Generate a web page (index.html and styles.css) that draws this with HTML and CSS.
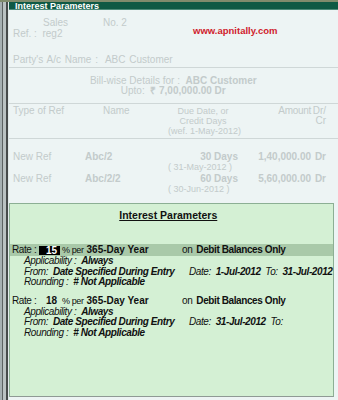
FILE: index.html
```html
<!DOCTYPE html>
<html lang="en">
<head>
  <meta charset="UTF-8" />
  <title>Interest Parameters</title>
  <link rel="stylesheet" href="styles.css">
</head>
<body>

  <div class="topline"></div>

  <div class="screen">
    <div class="edge"></div>

    <div class="main">
      <div class="titlebar">Interest Parameters</div>

      <div class="voucher-head">
        <div class="vh-row first">
          <span class="vtype">Sales</span>
          <span>No. 2</span>
        </div>
        <div class="vh-row ref">
          <span>Ref. :&nbsp; reg2</span>
          <span class="site">www.apnitally.com</span>
        </div>
        <div class="vh-row party">Party's A/c Name :&nbsp; ABC Customer</div>
      </div>

      <div class="bills">
        <div class="bills-title">
          <div>Bill-wise Details for :&nbsp; <b>ABC Customer</b></div>
          <div>Upto:&nbsp; <b>₹ 7,00,000.00 Dr</b></div>
        </div>

        <div class="bills-head cols">
          <span>Type of Ref</span>
          <span class="name-h">Name</span>
          <span class="due-h">Due Date, or<br>Credit Days<br>(wef. 1-May-2012)</span>
          <span class="amt">Amount</span>
          <span class="drcr">Dr/<br>Cr</span>
        </div>

        <div class="bill-list">
          <div class="bill cols">
            <span>New Ref</span>
            <b>Abc/2</b>
            <b class="days">30 Days</b>
            <b class="amt">1,40,000.00</b>
            <b class="drcr">Dr</b>
            <span class="due-date">( 31-May-2012 )</span>
          </div>
          <div class="bill cols">
            <span>New Ref</span>
            <b>Abc/2/2</b>
            <b class="days">60 Days</b>
            <b class="amt">5,60,000.00</b>
            <b class="drcr">Dr</b>
            <span class="due-date">( 30-Jun-2012 )</span>
          </div>
        </div>

        <div class="panel">
          <div class="panel-title">Interest Parameters</div>

          <div class="rate-block">
            <div class="rate-row active">
              <div class="rate-left">
                <span class="lbl">Rate :</span>
                <span class="pct current">15</span>
                <span class="per">% per</span>
                <b>365-Day Year</b>
              </div>
              <span class="on">on</span>
              <b>Debit Balances Only</b>
            </div>
            <div class="detail">Applicability :&nbsp; <b>Always</b></div>
            <div class="detail from">
              <div class="from-left">From:&nbsp; <b>Date Specified During Entry</b></div>
              <div>Date:&nbsp; <b>1-Jul-2012</b>&nbsp; To:&nbsp; <b>31-Jul-2012</b></div>
            </div>
            <div class="detail">Rounding :&nbsp; <b># Not Applicable</b></div>
          </div>

          <div class="rate-block second">
            <div class="rate-row">
              <div class="rate-left">
                <span class="lbl">Rate :</span>
                <span class="pct">18</span>
                <span class="per">% per</span>
                <b>365-Day Year</b>
              </div>
              <span class="on">on</span>
              <b>Debit Balances Only</b>
            </div>
            <div class="detail">Applicability :&nbsp; <b>Always</b></div>
            <div class="detail from">
              <div class="from-left">From:&nbsp; <b>Date Specified During Entry</b></div>
              <div>Date:&nbsp; <b>31-Jul-2012</b>&nbsp; To:</div>
            </div>
            <div class="detail">Rounding :&nbsp; <b># Not Applicable</b></div>
          </div>
        </div>
      </div>
    </div>
  </div>

</body>
</html>
```

FILE: styles.css
```css
* {
  box-sizing: border-box;
  margin: 0;
  padding: 0;
}

html, body {
  height: 400px;
  overflow: hidden;
}

body {
  font-family: 'Liberation Sans', Arial, sans-serif;
  font-size: 10px;
  line-height: 10px;
  background: #edf4f4;
  color: #c3cbcb;
  white-space: nowrap;
}

b {
  font-weight: 700;
}

.topline {
  height: 2px;
  background: #7f8b6c;
}

.screen {
  display: flex;
  height: 398px;
}

.edge {
  width: 9px;
  flex: none;
  background: linear-gradient(to right, #a6b0b2 0 2px, #5c6262 2px 3px, #b9c1c1 3px 6px, #464a4a 6px 8px, #e2eaea 8px 9px);
}

.main {
  flex: 1;
  display: flex;
  flex-direction: column;
}

.titlebar {
  height: 8px;
  background: #0e5944;
  border-bottom: 1px solid #4d8a78;
  color: #fff;
  font-size: 9px;
  font-weight: 700;
  line-height: 8px;
  padding-left: 6px;
}

/* faded voucher behind the popup */
.voucher-head {
  height: 57px;
  padding-top: 8px;
}

.vh-row {
  display: flex;
}

.vh-row.first {
  padding-left: 34px;
}

.vtype {
  width: 60px;
}

.vh-row.ref {
  display: grid;
  grid-template-columns: 180px auto;
  padding-left: 4px;
  margin-top: 1px;
}

.site {
  color: #d0222c;
  font-size: 9.5px;
  font-weight: 700;
  margin-top: -3px;
}

.vh-row.party {
  padding-left: 4px;
  margin-top: 16px;
  word-spacing: 1px;
}

.bills {
  flex: 1;
  margin-right: 2px;
  border-top: 1px solid #cfd7d7;
  border-right: 1px solid #cfd7d7;
}

.bills-title {
  text-align: center;
  padding: 8px 0 7px;
  border-bottom: 1px solid #cfd7d7;
}

.cols {
  display: grid;
  grid-template-columns: 72px 83px 70px 73px 15px;
  padding-left: 4px;
}

.bills-head {
  padding-top: 2px;
  padding-bottom: 2px;
  border-bottom: 1px solid #cfd7d7;
}

.name-h {
  padding-left: 18px;
}

.due-h {
  text-align: center;
  font-size: 9px;
}

.amt, .days, .drcr {
  text-align: right;
}

.bills-head .amt {
  letter-spacing: -0.3px;
}

.bill-list {
  padding-top: 13px;
  display: flex;
  flex-direction: column;
  gap: 2px;
}

.due-date {
  grid-column: 3;
  font-size: 9px;
}

/* popup */
.panel {
  margin-top: 9px;
  margin-right: 4px;
  height: 194px;
  background: #d4f0d4;
  border: 1px solid #8caf94;
  border-bottom-color: #8f9a95;
  color: #111;
  letter-spacing: -0.4px;
}

.panel-title {
  text-align: center;
  font-size: 10.5px;
  line-height: 13px;
  font-weight: 700;
  letter-spacing: 0;
  text-decoration: underline;
  padding: 5px 6px 0 0;
}

.rate-block {
  margin-top: 22px;
}

.rate-block.second {
  margin-top: 7px;
}

.rate-row {
  display: flex;
  align-items: center;
  height: 12px;
  padding-left: 2px;
}

.rate-row.active {
  background: #a9c9a9;
}

.rate-left {
  width: 170px;
  flex: none;
  display: flex;
  align-items: center;
}

.lbl {
  width: 27px;
}

.pct {
  width: 21px;
  height: 9px;
  line-height: 9px;
  text-align: right;
  padding-right: 3px;
  font-weight: 700;
  letter-spacing: 0;
}

.pct.current {
  background: #000;
  color: #fff;
}

.per {
  font-size: 9px;
  margin: 0 3px 0 2px;
}

.rate-left b {
  letter-spacing: 0;
}

.on {
  margin-right: 4px;
}

.detail {
  padding-left: 14px;
  line-height: 10.5px;
  font-style: italic;
}

.detail.from {
  display: flex;
}

.from-left {
  width: 165px;
  flex: none;
}
```
